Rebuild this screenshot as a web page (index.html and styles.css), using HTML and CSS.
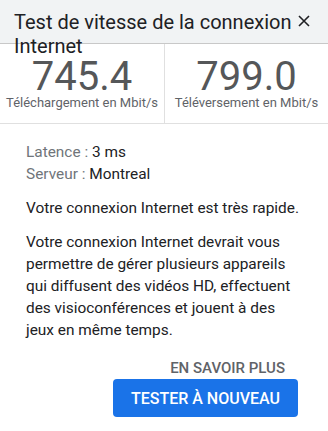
FILE: index.html
```html
<!DOCTYPE html>
<html lang="fr">
<head>
<meta charset="utf-8">
<title>Test de vitesse</title>
<link rel="stylesheet" href="styles.css">
</head>
<body>
<div class="dialog">
  <header class="head">
    <h1 class="title">Test de vitesse de la connexion Internet</h1>
    <button class="close" aria-label="Fermer">
      <svg width="12" height="12" viewBox="0 0 12 12"><path d="M1 1L11 11M11 1L1 11" stroke="#202124" stroke-width="1.6" fill="none"/></svg>
    </button>
  </header>
  <section class="metrics">
    <div class="metric">
      <div class="num">745.4</div>
      <div class="unit">Téléchargement en Mbit/s</div>
    </div>
    <div class="metric">
      <div class="num">799.0</div>
      <div class="unit">Téléversement en Mbit/s</div>
    </div>
  </section>
  <section class="details">
    <div class="info">
      <div><span class="lbl">Latence : </span><span class="val">3 ms</span></div>
      <div><span class="lbl">Serveur : </span><span class="val">Montreal</span></div>
    </div>
    <p class="text">Votre connexion Internet est très rapide.</p>
    <p class="text">Votre connexion Internet devrait vous permettre de gérer plusieurs appareils qui diffusent des vidéos HD, effectuent des visioconférences et jouent à des jeux en même temps.</p>
    <div class="actions">
      <a class="link-btn" href="#">EN SAVOIR PLUS</a>
      <button class="primary">TESTER À NOUVEAU</button>
    </div>
  </section>
</div>
</body>
</html>
```
FILE: styles.css
```css
* { box-sizing: border-box; }
html, body { margin: 0; padding: 0; background: #fff; }
body { font-family: Roboto, "Noto Sans", sans-serif; color: #202124; width: 328px; height: 431px; overflow: hidden; }
.dialog { display: flex; flex-direction: column; }
.head {
  height: 44px;
  background: #f1f3f4;
  border-bottom: 1px solid #c8c8c8;
  display: flex;
  align-items: flex-start;
  padding: 10px 17px 0 14px;
  gap: 1px;
}
.title {
  flex: 1;
  margin: 0;
  font-size: 20px;
  font-weight: 400;
  line-height: normal;
  color: #202124;
}
.close {
  border: 0;
  background: none;
  padding: 0;
  margin-top: 3px;
  width: 14px;
  height: 16px;
  display: flex;
  align-items: center;
  justify-content: center;
}
.metrics {
  display: grid;
  grid-template-columns: 1fr 1fr;
  border-bottom: 1px solid #e0e0e0;
}
.metric {
  display: flex;
  flex-direction: column;
  align-items: center;
  padding: 17px 0 10px;
}
.metric + .metric { border-left: 1px solid #e0e0e0; }
.num {
  font-size: 40px;
  line-height: 32px;
  color: #555759;
}
.unit {
  font-size: 13px;
  line-height: 20px;
  color: #5f6368;
  white-space: nowrap;
}
.details {
  padding: 17px 24px 0 26px;
}
.info { font-size: 15.4px; line-height: 22px; }
.lbl { color: #70757a; }
.val { color: #202124; }
.text {
  margin: 12px 0 0;
  font-size: 15.4px;
  line-height: 22px;
  color: #202124;
}
.actions {
  display: flex;
  flex-direction: column;
  align-items: flex-end;
  margin-top: 17px;
  padding-right: 6px;
}
.link-btn {
  font-size: 15px;
  font-weight: 500;
  color: #5f6368;
  text-decoration: none;
  padding: 0 13px 0 0;
  line-height: 20px;
}
.primary {
  margin-top: 1px;
  width: 185px;
  height: 38px;
  background: #1a73e8;
  color: #fff;
  border: 0;
  border-radius: 4px;
  font-family: Roboto, sans-serif;
  font-size: 16px;
  font-weight: 500;
  padding: 0;
}
```
